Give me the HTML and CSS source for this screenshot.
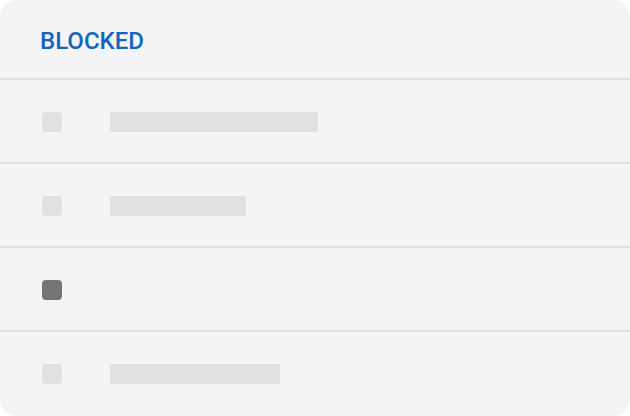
FILE: index.html
```html
<!DOCTYPE html>
<html>
<head>
<meta charset="utf-8">
<link rel="stylesheet" href="styles.css">
</head>
<body>
<div class="card">
  <div class="header"><span class="title">BLOCKED</span></div>
  <div class="row"><span class="check"></span><span class="bar" style="width:208px"></span></div>
  <div class="row"><span class="check"></span><span class="bar" style="width:136px"></span></div>
  <div class="row"><span class="check dark"></span></div>
  <div class="row last"><span class="check"></span><span class="bar" style="width:170px"></span></div>
</div>
</body>
</html>
```
FILE: styles.css
```css
html, body {
  margin: 0;
  padding: 0;
  background: #ffffff;
}
.card {
  width: 630px;
  height: 416px;
  background: #f4f4f4;
  border-radius: 16px;
  overflow: hidden;
  display: flex;
  flex-direction: column;
  font-family: Roboto, "Liberation Sans", sans-serif;
}
.header {
  height: 80px;
  box-sizing: border-box;
  display: flex;
  align-items: center;
  padding: 4px 0 0 40px;
  border-bottom: 2px solid #e0e0e0;
}
.title {
  color: #1565c0;
  font-size: 24px;
  font-weight: 500;
}
.row {
  height: 84px;
  box-sizing: border-box;
  display: flex;
  align-items: center;
  padding: 2px 0 0 42px;
  gap: 48px;
  border-bottom: 2px solid #e0e0e0;
}
.row.last {
  border-bottom: none;
  padding-top: 0;
}
.check {
  width: 20px;
  height: 20px;
  border-radius: 4px;
  background: #e0e1e3;
  flex: none;
}
.check.dark {
  background: #757575;
}
.bar {
  height: 20px;
  background: #e0e1e3;
}
```
